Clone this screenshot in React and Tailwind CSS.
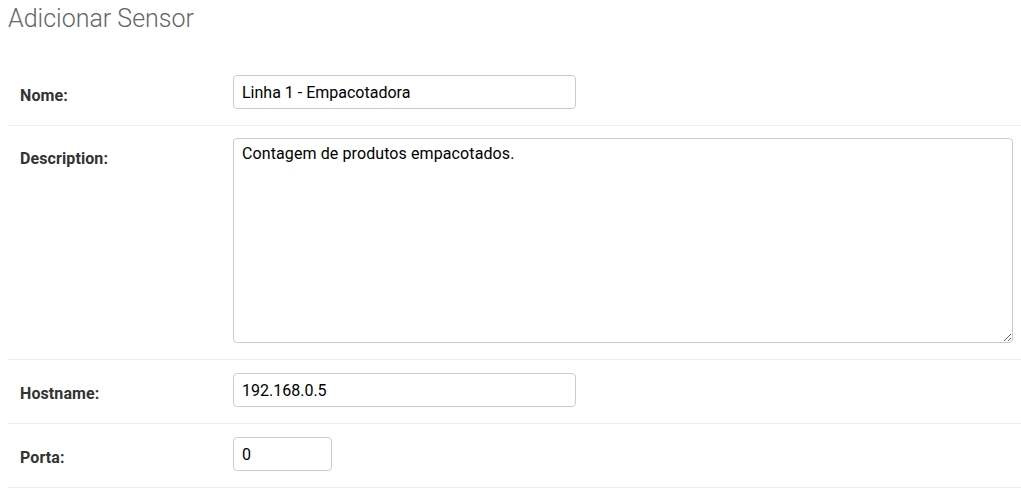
const FIELDS = [
  { label: 'Nome:', value: 'Linha 1 - Empacotadora', width: 'w-[343px]' },
  { label: 'Description:', value: 'Contagem de produtos empacotados.', textarea: true },
  { label: 'Hostname:', value: '192.168.0.5', width: 'w-[343px]' },
  { label: 'Porta:', value: '0', width: 'w-[99px]' },
]

export default function App() {
  return (
    <div className="min-h-screen bg-white pl-2 pt-[4px] font-['Roboto',sans-serif] text-[#333]">
      <h1 className="m-0 text-[25px] font-light leading-[1.2] text-[#666]">Adicionar Sensor</h1>
      <form className="mt-[28px]">
        {FIELDS.map((f) => (
          <div
            className={`flex border-b border-[#eee] pb-4 pl-3 pr-2 ${f.textarea ? 'pt-3' : 'pt-[13px]'}`}
            key={f.label}
          >
            <label className="w-[213px] shrink-0 pt-[11px] text-[16px] font-bold leading-5 tracking-[0.1px] text-[#333]">
              {f.label}
            </label>
            {f.textarea ? (
              <textarea
                className="h-[205px] flex-1 rounded-[4px] border border-[#ccc] px-2 py-[5px] text-[16px] leading-5 tracking-[0.1px] text-black outline-none"
                defaultValue={f.value}
              />
            ) : (
              <input
                className={`${f.width} h-[34px] rounded-[4px] border border-[#ccc] px-2 text-[16px] text-black outline-none`}
                defaultValue={f.value}
                type="text"
              />
            )}
          </div>
        ))}
      </form>
    </div>
  )
}
